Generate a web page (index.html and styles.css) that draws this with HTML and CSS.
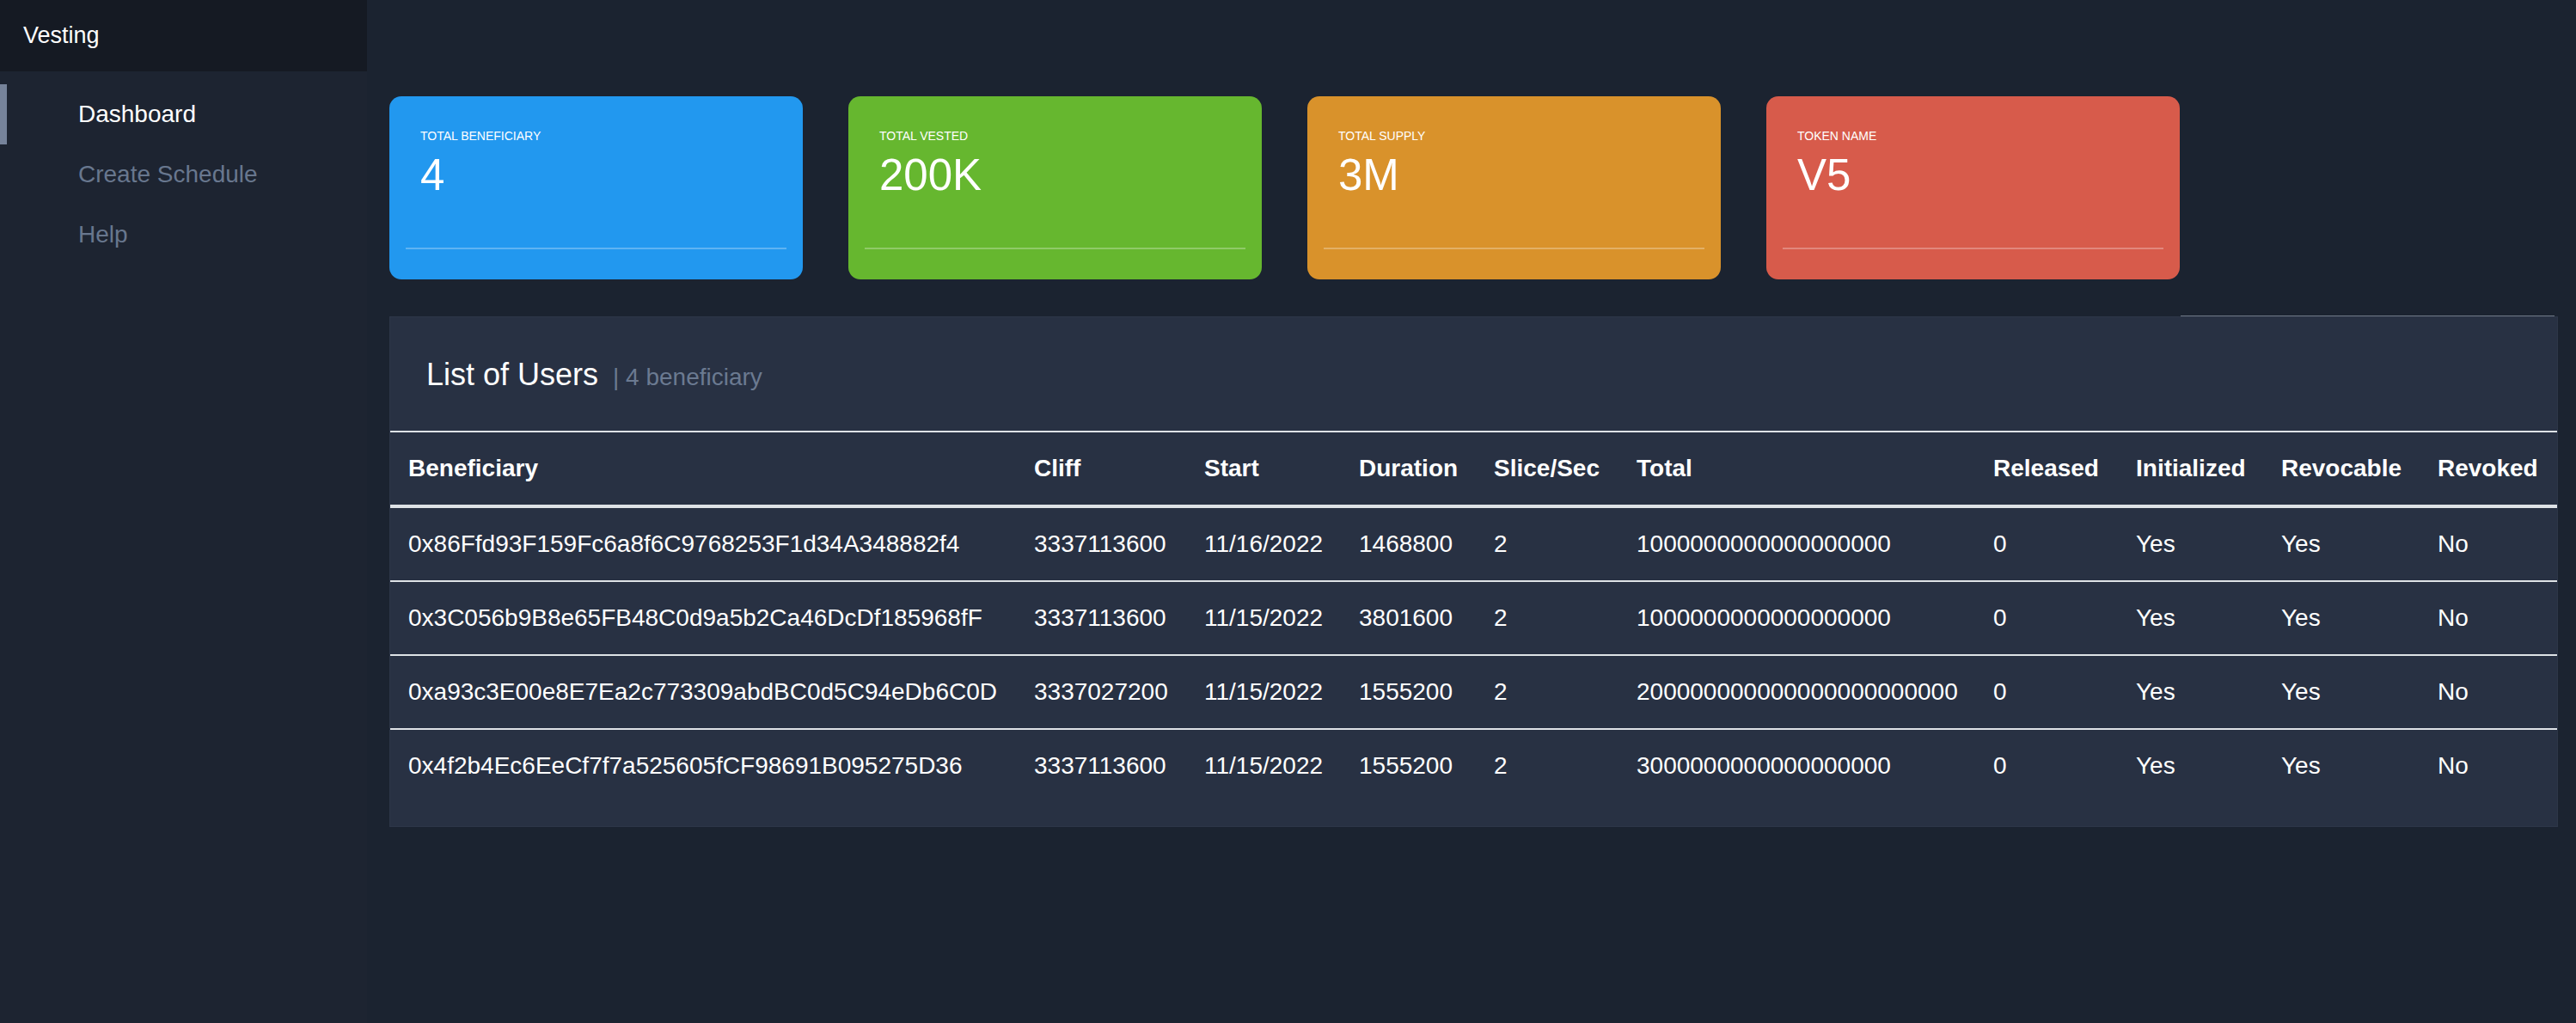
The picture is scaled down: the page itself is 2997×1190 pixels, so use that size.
FILE: index.html
```html
<!DOCTYPE html>
<html lang="en">
<head>
<meta charset="utf-8">
<title>Vesting</title>
<link rel="stylesheet" href="styles.css">
</head>
<body>
<div class="app">
  <aside class="sidebar">
    <div class="brand">Vesting</div>
    <nav class="nav">
      <a class="nav-item active">Dashboard</a>
      <a class="nav-item">Create Schedule</a>
      <a class="nav-item">Help</a>
    </nav>
  </aside>
  <main class="main">
    <section class="cards">
      <div class="card card-blue">
        <div class="card-body">
          <div class="card-label">TOTAL BENEFICIARY</div>
          <div class="card-value">4</div>
        </div>
        <div class="card-rule"></div>
      </div>
      <div class="card card-green">
        <div class="card-body">
          <div class="card-label">TOTAL VESTED</div>
          <div class="card-value">200K</div>
        </div>
        <div class="card-rule"></div>
      </div>
      <div class="card card-orange">
        <div class="card-body">
          <div class="card-label">TOTAL SUPPLY</div>
          <div class="card-value">3M</div>
        </div>
        <div class="card-rule"></div>
      </div>
      <div class="card card-red">
        <div class="card-body">
          <div class="card-label">TOKEN NAME</div>
          <div class="card-value">V5</div>
        </div>
        <div class="card-rule"></div>
      </div>
    </section>
    <section class="panel">
      <div class="panel-head">
        <h4 class="panel-title">List of Users</h4>
        <span class="panel-sub">| 4 beneficiary</span>
      </div>
      <table class="users">
        <colgroup>
          <col class="c-ben"><col class="c-cliff"><col class="c-start"><col class="c-dur"><col class="c-slice"><col class="c-total"><col class="c-rel"><col class="c-init"><col class="c-revc"><col class="c-revk">
        </colgroup>
        <thead>
          <tr><th>Beneficiary</th><th>Cliff</th><th>Start</th><th>Duration</th><th>Slice/Sec</th><th>Total</th><th>Released</th><th>Initialized</th><th>Revocable</th><th>Revoked</th></tr>
        </thead>
        <tbody>
          <tr><td>0x86Ffd93F159Fc6a8f6C9768253F1d34A348882f4</td><td>3337113600</td><td>11/16/2022</td><td>1468800</td><td>2</td><td>1000000000000000000</td><td>0</td><td>Yes</td><td>Yes</td><td>No</td></tr>
          <tr><td>0x3C056b9B8e65FB48C0d9a5b2Ca46DcDf185968fF</td><td>3337113600</td><td>11/15/2022</td><td>3801600</td><td>2</td><td>1000000000000000000</td><td>0</td><td>Yes</td><td>Yes</td><td>No</td></tr>
          <tr><td>0xa93c3E00e8E7Ea2c773309abdBC0d5C94eDb6C0D</td><td>3337027200</td><td>11/15/2022</td><td>1555200</td><td>2</td><td>200000000000000000000000</td><td>0</td><td>Yes</td><td>Yes</td><td>No</td></tr>
          <tr><td>0x4f2b4Ec6EeCf7f7a525605fCF98691B095275D36</td><td>3337113600</td><td>11/15/2022</td><td>1555200</td><td>2</td><td>3000000000000000000</td><td>0</td><td>Yes</td><td>Yes</td><td>No</td></tr>
        </tbody>
      </table>
    </section>
  </main>
</div>
</body>
</html>
```
FILE: styles.css
```css
* { box-sizing: border-box; }
html, body { margin: 0; padding: 0; }
body {
  background: #1b2330;
  color: #fff;
  font-family: "Liberation Sans", Arial, sans-serif;
  width: 2997px;
  height: 1190px;
  overflow: hidden;
}
.app {
  display: flex;
  height: 1190px;
}
.sidebar {
  width: 427px;
  flex: none;
  background: #1d2431;
  display: flex;
  flex-direction: column;
}
.brand {
  height: 83px;
  background: #151a23;
  display: flex;
  align-items: center;
  padding-left: 27px;
  font-size: 27px;
  color: #fff;
}
.nav {
  margin-top: 15px;
  display: flex;
  flex-direction: column;
}
.nav-item {
  height: 70px;
  display: flex;
  align-items: center;
  padding-left: 83px;
  font-size: 28px;
  color: #68778e;
  border-left: 8px solid transparent;
}
.nav-item.active {
  color: #fff;
  border-left-color: #76839a;
}
.main {
  flex: 1;
  padding: 112px 21px 0 26px;
}
.cards {
  display: flex;
  gap: 53px;
}
.card {
  width: 481px;
  height: 213px;
  border-radius: 14px;
  display: flex;
  flex-direction: column;
  padding: 0 19px 35px;
}
.card-blue { background: #2298ef; }
.card-green { background: #66b72f; }
.card-orange { background: #d9922b; }
.card-red { background: #d75b4b; }
.card-body {
  padding: 38px 17px 0;
}
.card-label {
  font-size: 14px;
  line-height: 17px;
  color: #fff;
}
.card-value {
  margin-top: 8px;
  font-size: 51px;
  line-height: 57px;
  color: #fff;
}
.card-rule {
  margin-top: auto;
  height: 2px;
  background: rgba(255, 255, 255, 0.28);
}
.panel {
  position: relative;
  margin-top: 43px;
  width: 2523px;
  background: #283143;
  border: 1px solid #2d3648;
}
.panel::before {
  content: "";
  position: absolute;
  top: -2px;
  left: 2083px;
  right: 3px;
  height: 1px;
  background: #6e7886;
}
.panel-head {
  display: flex;
  align-items: baseline;
  gap: 17px;
  padding: 46px 42px 45px;
}
.panel-title {
  margin: 0;
  font-size: 36px;
  font-weight: normal;
  line-height: 41px;
  color: #fff;
}
.panel-sub {
  font-size: 28px;
  color: #6b7a91;
}
.users {
  width: 100%;
  table-layout: fixed;
  border-collapse: collapse;
  margin-bottom: 28px;
  font-size: 28px;
  line-height: 42px;
}
.users th, .users td {
  padding: 21px;
  text-align: left;
  vertical-align: top;
  white-space: nowrap;
  overflow: visible;
  color: #fff;
}
.users th {
  font-weight: bold;
  border-top: 2px solid #dee2e6;
  border-bottom: 4px solid #dee2e6;
}
.users td {
  border-top: 2px solid #dee2e6;
}
.c-ben { width: 728px; }
.c-cliff { width: 198px; }
.c-start { width: 180px; }
.c-dur { width: 157px; }
.c-slice { width: 166px; }
.c-total { width: 415px; }
.c-rel { width: 166px; }
.c-init { width: 169px; }
.c-revc { width: 182px; }
.c-revk { width: 160px; }
```
